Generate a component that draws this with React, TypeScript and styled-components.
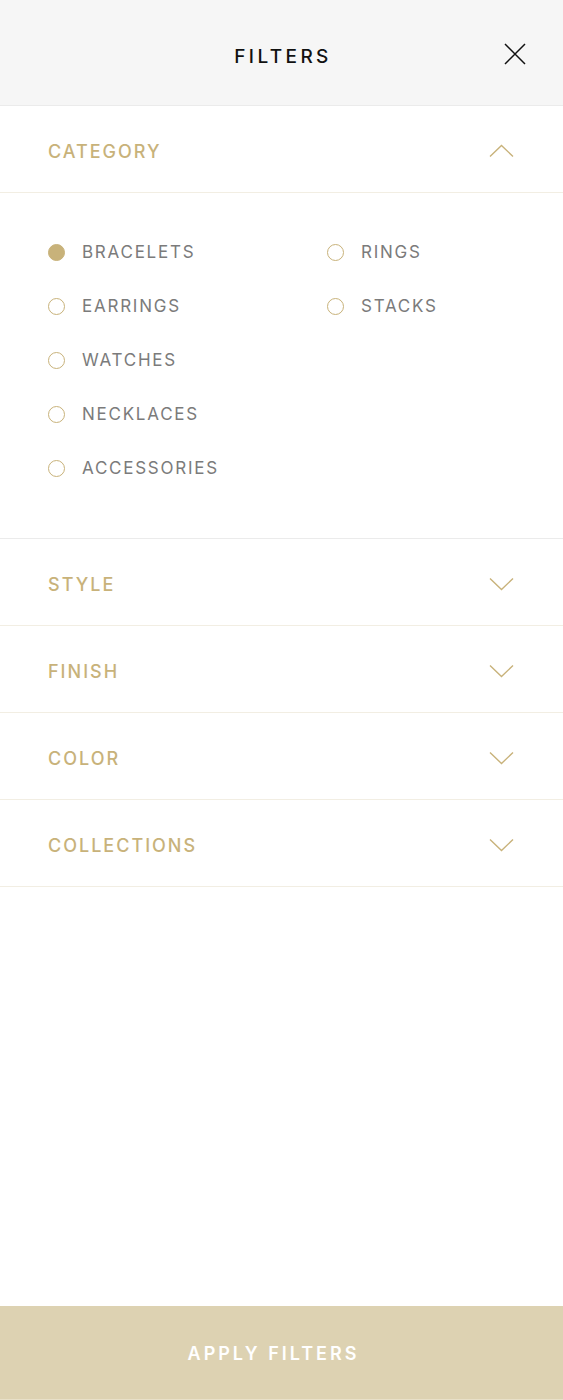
import * as React from 'react'
import styled, { createGlobalStyle } from 'styled-components'

const GOLD = '#c8b27a'

const GlobalStyle = createGlobalStyle`
  html, body {
    margin: 0;
    padding: 0;
    background: #fff;
  }
  * {
    box-sizing: border-box;
  }
`

const Page = styled.div`
  min-height: 100vh;
  display: flex;
  flex-direction: column;
  font-family: Inter, 'Liberation Sans', sans-serif;
`

const Header = styled.header`
  height: 106px;
  background: #f6f6f6;
  border-bottom: 1px solid #ebebeb;
  display: flex;
  align-items: center;
  justify-content: center;
  position: relative;
`

const Title = styled.h1`
  margin: 0;
  padding: 8px 0 0 3px;
  font-size: 19px;
  font-weight: 500;
  letter-spacing: 3.4px;
  color: #111;
`

const CloseButton = styled.button`
  position: absolute;
  right: 36px;
  top: 42px;
  width: 24px;
  height: 24px;
  padding: 0;
  border: 0;
  background: none;
  display: flex;
  align-items: center;
  justify-content: center;
`

const SectionRow = styled.div`
  height: 87px;
  padding: 4px 48px 0 48px;
  display: flex;
  align-items: center;
  justify-content: space-between;
  border-bottom: 1px solid #f2eee3;
`

const SectionTitle = styled.span`
  font-size: 18px;
  font-weight: 500;
  letter-spacing: 2px;
  color: ${GOLD};
`

const Chevron = styled.svg`
  width: 25px;
  height: 14px;
  margin-right: 1px;
`

const Panel = styled.div`
  display: flex;
  padding: 32px 0 43px 48px;
  border-bottom: 1px solid #ebebeb;
`

const Column = styled.div<{ $width?: number }>`
  display: flex;
  flex-direction: column;
  width: ${p => (p.$width ? `${p.$width}px` : 'auto')};
`

const Option = styled.label`
  height: 54px;
  display: flex;
  align-items: center;
  gap: 17px;
  font-size: 17px;
  letter-spacing: 1.75px;
  color: #7b7b7b;
`

const Radio = styled.span<{ $checked?: boolean }>`
  width: 17px;
  height: 17px;
  border-radius: 50%;
  border: 1.6px solid ${GOLD};
  background: ${p => (p.$checked ? GOLD : 'transparent')};
  flex-shrink: 0;
`

const Spacer = styled.div`
  flex: 1;
`

const ApplyButton = styled.button`
  height: 94px;
  padding: 2px 16px 0 0;
  border: 0;
  border-bottom: 1px solid #e8e0c8;
  background: #ddd2b2;
  color: #fff;
  font-family: Inter, 'Liberation Sans', sans-serif;
  font-size: 18px;
  font-weight: 600;
  letter-spacing: 3px;
`

const ChevronIcon = ({ up }: { up?: boolean }) => (
  <Chevron viewBox="0 0 25 14" fill="none">
    <path
      d={up ? 'M1 12.5 L12.5 1.5 L24 12.5' : 'M1 1.5 L12.5 12.5 L24 1.5'}
      stroke={GOLD}
      strokeWidth="1.4"
    />
  </Chevron>
)

const leftOptions = ['BRACELETS', 'EARRINGS', 'WATCHES', 'NECKLACES', 'ACCESSORIES']
const rightOptions = ['RINGS', 'STACKS']
const closedSections = ['STYLE', 'FINISH', 'COLOR', 'COLLECTIONS']

export default function App() {
  const [selected, setSelected] = React.useState('BRACELETS')

  const renderOption = (name: string) => (
    <Option key={name} onClick={() => setSelected(name)}>
      <Radio $checked={selected === name} />
      {name}
    </Option>
  )

  return (
    <Page>
      <GlobalStyle />
      <Header>
        <Title>FILTERS</Title>
        <CloseButton aria-label="Close">
          <svg width="22" height="22" viewBox="0 0 22 22">
            <path d="M1 1 L21 21 M21 1 L1 21" stroke="#111" strokeWidth="1.5" />
          </svg>
        </CloseButton>
      </Header>

      <SectionRow>
        <SectionTitle>CATEGORY</SectionTitle>
        <ChevronIcon up />
      </SectionRow>
      <Panel>
        <Column $width={279}>{leftOptions.map(renderOption)}</Column>
        <Column>{rightOptions.map(renderOption)}</Column>
      </Panel>

      {closedSections.map(s => (
        <SectionRow key={s}>
          <SectionTitle>{s}</SectionTitle>
          <ChevronIcon />
        </SectionRow>
      ))}

      <Spacer />
      <ApplyButton>APPLY FILTERS</ApplyButton>
    </Page>
  )
}
